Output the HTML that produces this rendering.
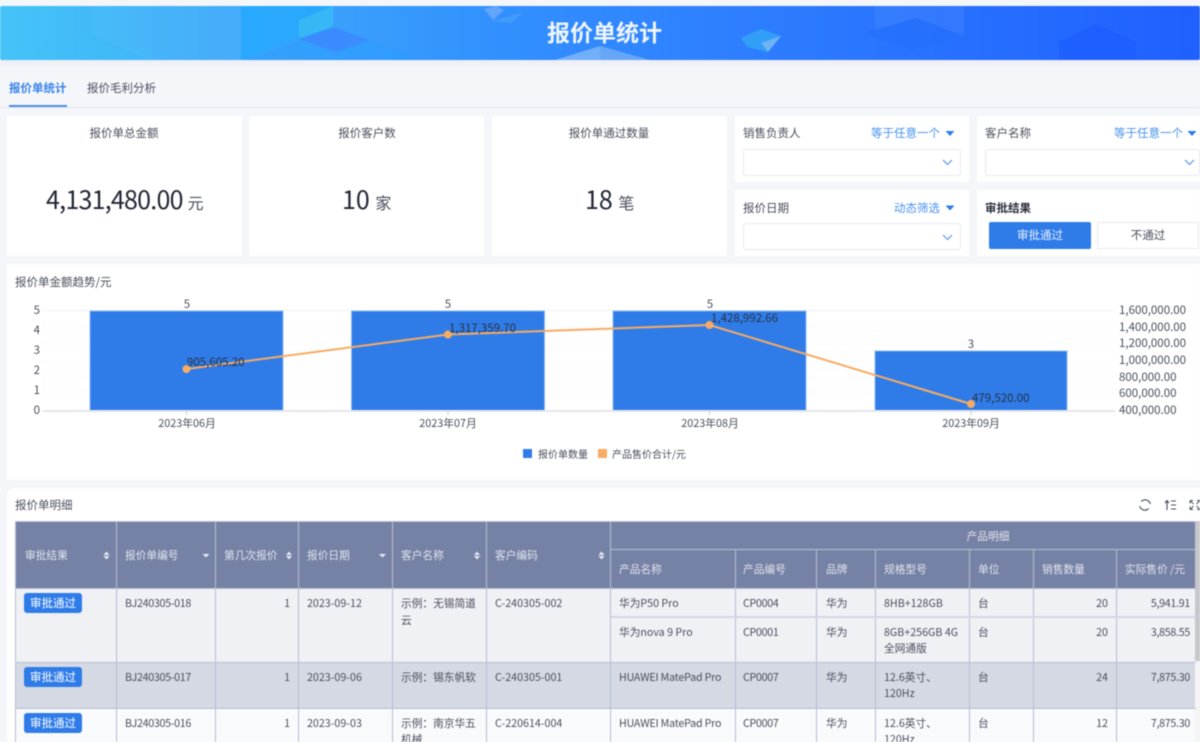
<!DOCTYPE html>
<html lang="zh"><head><meta charset="utf-8"><title>报价单统计</title>
<style>
html,body{margin:0;padding:0;width:1200px;height:742px;overflow:hidden;background:#f4f6fa}
body{position:relative;font-family:"Liberation Sans","Noto Sans CJK SC",sans-serif}
#w{position:absolute;left:0;top:0;width:1200px;height:742px;overflow:hidden;filter:blur(.45px);font-family:"Noto Sans CJK SC",sans-serif}
.b{position:absolute;box-sizing:border-box}
.t{position:absolute;white-space:nowrap;height:20px;line-height:20px;font-size:11.5px;color:#4a4f5c}
.c{transform:translateX(-50%)}
.r{transform:translateX(-100%)}
.card{position:absolute;background:#fff}
.sel{position:absolute;box-sizing:border-box;border:1px solid #e8eaef;border-radius:3px;height:27px}
.h{color:#e0e4ee;font-size:10.7px;margin-top:1px}
.d{font-size:10.7px;color:#4a4f5c;margin-top:1px}
.tag{position:absolute;left:24px;width:58px;height:20px;line-height:21px;background:#2f7ce9;border-radius:3px;color:#fff;font-size:11.5px;text-align:center}
.f{color:#4a93ee}
.big{height:30px;line-height:30px;font-size:25px;color:#202634}
.big span{font-size:16px;color:#4a4f5c;letter-spacing:0}
.m{font-size:11.5px}
.x{font-size:10.8px}
.bj{letter-spacing:-.3px}.hw{letter-spacing:-.2px}.cp{letter-spacing:-.3px}.pr{letter-spacing:-.3px}
</style></head><body>
<div id="w">
<!-- banner -->
<div class="b" style="left:0;top:60px;width:1200px;height:8px;background:linear-gradient(#eceef4,#f4f6fa)"></div>
<svg class="b" style="left:0;top:6px" width="1200" height="54" viewBox="0 0 1200 54">
<defs><linearGradient id="g" x1="0" x2="1" y1="0" y2="0">
<stop offset="0" stop-color="#45c4f8"/><stop offset=".2" stop-color="#3fa9fa"/><stop offset=".4" stop-color="#3292fe"/><stop offset=".6" stop-color="#2f80ff"/><stop offset="1" stop-color="#1f60ff"/></linearGradient></defs>
<rect width="1200" height="54" rx="2" fill="url(#g)"/>
<path d="M0 54L92 28L150 47L150 54Z" fill="#3fc0f8" opacity=".25"/>
<path d="M92 0H241V54H150L92 28Z" fill="#fff" opacity=".03"/>
<path d="M241 0H333V24L299 32L241 54Z" fill="#21a9ff" opacity=".7"/>
<path d="M241 54L333 22L420 54Z" fill="#2d9cff" opacity=".6"/>
<path d="M299 14L333 0V21L299 32Z" fill="#4dd0e8" opacity=".4"/>
<path d="M299 33L333 21L369 34L336 46Z" fill="#3f82ff" opacity=".65"/>
<path d="M484 3L496 0L504 4L493 14Z" fill="#8ab6f8" opacity=".55"/>
<path d="M492 15L524 6L511 17Z" fill="#53a6f5" opacity=".5"/>
<path d="M555 54L600 40V54Z" fill="#a8cdf5" opacity=".55"/>
<path d="M600 40L650 54H600Z" fill="#a8cdf5" opacity=".45"/>
<path d="M741 32L761 23L781 30L768 46L747 41Z" fill="#33a5f6" opacity=".85"/>
<path d="M761 37L781 30L768 46Z" fill="#7db8f4" opacity=".8"/>
<path d="M863 27L916 12L964 30L912 44Z" fill="#1f6cf5" opacity=".35"/>
<path d="M875 0H964V30L916 12L875 24Z" fill="#6ea2ff" opacity=".18"/>
<path d="M1059 36L1096 18L1136 36V54H1059Z" fill="#1b5cff" opacity=".6"/>
</svg>
<div class="t c" style="left:604.500px;top:17px;height:28px;line-height:28px;color:#eef5ff;font-size:23px;font-weight:700">报价单统计</div>
<!-- tabs -->
<div class="b" style="left:0;top:107px;width:1200px;height:1px;background:#e6e8ed"></div>
<div class="b" style="left:9px;top:105px;width:58px;height:2px;background:#4a8de9"></div>
<div class="t" style="left:9px;top:78px;color:#3b83ea;font-weight:700">报价单统计</div>
<div class="t" style="left:87px;top:78px">报价毛利分析</div>
<!-- KPI cards -->
<div class="card" style="left:7px;top:116px;width:235px;height:140px"></div>
<div class="card" style="left:249px;top:116px;width:235px;height:140px"></div>
<div class="card" style="left:492px;top:116px;width:235px;height:140px"></div>
<div class="t c" style="left:124px;top:123px">报价单总金额</div>
<div class="t c" style="left:367px;top:123px">报价客户数</div>
<div class="t c" style="left:609px;top:123px">报价单通过数量</div>
<div class="t big" style="left:46px;top:184px;letter-spacing:-.75px">4,131,480.00 <span>元</span></div>
<div class="t big" style="left:342px;top:184px">10 <span>家</span></div>
<div class="t big" style="left:585px;top:184px">18 <span>笔</span></div>
<!-- filters -->
<div class="card" style="left:735px;top:116px;width:234px;height:66px"></div>
<div class="card" style="left:977px;top:116px;width:223px;height:66px"></div>
<div class="card" style="left:735px;top:190px;width:234px;height:66px"></div>
<div class="card" style="left:977px;top:190px;width:223px;height:66px"></div>
<div class="t" style="left:743px;top:123px">销售负责人</div>
<div class="t" style="left:985px;top:123px">客户名称</div>
<div class="t" style="left:743px;top:198px">报价日期</div>
<div class="t" style="left:985px;top:198px;font-weight:700;color:#2c303b">审批结果</div>
<div class="t f" style="left:871px;top:123px">等于任意一个</div>
<div class="t f" style="left:1114px;top:123px">等于任意一个</div>
<div class="t f" style="left:894px;top:198px">动态筛选</div>
<div class="sel" style="left:743px;top:149px;width:218px"></div>
<div class="sel" style="left:985px;top:149px;width:215px"></div>
<div class="sel" style="left:743px;top:223px;width:218px"></div>
<svg class="b" style="left:0;top:0" width="1200" height="260" fill="none">
<path d="M945.500 131h9l-4.500 5z M1187.500 131h9l-4.500 5z M945.500 205.500h9l-4.500 5z" fill="#2f7ce9"/>
<path d="M943 160l4.500 4.500 4.500-4.500 M1185 160l4.500 4.500 4.500-4.500 M943 235l4.500 4.500 4.500-4.500" stroke="#4a93ee" stroke-width="1.100"/>
</svg>
<div class="b" style="left:989px;top:222px;width:102px;height:27px;background:#2f7ce9;border-radius:2px;color:#e8f1fd;font-size:11.5px;line-height:27px;text-align:center">审批通过</div>
<div class="b" style="left:1097px;top:222px;width:102px;height:27px;background:#fff;border:1px solid #e8eaef;border-radius:2px;color:#4a4f5c;font-size:11.5px;line-height:25px;text-align:center">不通过</div>
<!-- chart -->
<div class="card" style="left:7px;top:264px;width:1193px;height:216px"></div>
<div class="t" style="left:15px;top:272px">报价单金额趋势/元</div>
<svg class="b" style="left:0;top:264px" width="1200" height="216" viewBox="0 264 1200 216">
<g stroke="#f5f6f8" stroke-dasharray="2 2" fill="none">
<path d="M43 330.500H1115M43 350.500H1115M43 370.500H1115M43 390.500H1115M43 326.500H1115M43 343.500H1115M43 360.500H1115M43 377.500H1115M43 393.500H1115"/>
</g>
<path d="M43 310.500H1115" stroke="#f1f2f5"/>
<g fill="#2f7ce9" stroke="#8dbaf4" stroke-width="1">
<rect x="90" y="311" width="193" height="100"/><rect x="351.500" y="311" width="193" height="100"/><rect x="613" y="311" width="193" height="100"/><rect x="875" y="351" width="192" height="60"/>
</g>
<path d="M43 411H1115" stroke="#e5e6ea" stroke-width="2"/>
<path d="M186.500 411v4M448 411v4M709.500 411v4M971 411v4" stroke="#c8cad0"/>
<polyline points="186.500,369 448,334.500 709.500,325 971,404" fill="none" stroke="#f8ab62" stroke-width="2"/>
<g fill="#f8ab62"><circle cx="186.500" cy="369" r="4"/><circle cx="448" cy="334.500" r="4"/><circle cx="709.500" cy="325" r="4"/><circle cx="971" cy="404" r="4"/></g>
<rect x="523" y="449" width="9" height="9" fill="#2f7ce9"/><rect x="598" y="449" width="9" height="9" fill="#f8ab62"/>
</svg>
<div class="t c m" style="left:187px;top:294px">5</div>
<div class="t c m" style="left:448px;top:294px">5</div>
<div class="t c m" style="left:710px;top:294px">5</div>
<div class="t c m" style="left:971px;top:334px">3</div>
<div class="t m" style="left:187px;top:352px;color:#2a3142">905,605.20</div>
<div class="t m" style="left:449px;top:318px;color:#2a3142">1,317,359.70</div>
<div class="t m" style="left:711px;top:308px;color:#2a3142">1,428,992.66</div>
<div class="t m" style="left:972px;top:388px;color:#2a3142">479,520.00</div>
<div class="t r m" style="left:40px;top:300px">5</div>
<div class="t r m" style="left:40px;top:320px">4</div>
<div class="t r m" style="left:40px;top:340px">3</div>
<div class="t r m" style="left:40px;top:360px">2</div>
<div class="t r m" style="left:40px;top:380px">1</div>
<div class="t r m" style="left:40px;top:400px">0</div>
<div class="t m" style="left:1119px;top:300px">1,600,000.00</div>
<div class="t m" style="left:1119px;top:317px">1,400,000.00</div>
<div class="t m" style="left:1119px;top:333px">1,200,000.00</div>
<div class="t m" style="left:1119px;top:350px">1,000,000.00</div>
<div class="t m" style="left:1119px;top:367px">800,000.00</div>
<div class="t m" style="left:1119px;top:383px">600,000.00</div>
<div class="t m" style="left:1119px;top:400px">400,000.00</div>
<div class="t c x" style="left:187px;top:413px">2023年06月</div>
<div class="t c x" style="left:448px;top:413px">2023年07月</div>
<div class="t c x" style="left:710px;top:413px">2023年08月</div>
<div class="t c x" style="left:971px;top:413px">2023年09月</div>
<div class="t" style="left:538px;top:444px;font-size:10px">报价单数量</div>
<div class="t" style="left:612px;top:444px;font-size:10px">产品售价合计/元</div>
<!-- table card -->
<div class="card" style="left:7px;top:488px;width:1193px;height:254px;border-radius:8px 0 0 0"></div>
<div class="t" style="left:15px;top:495px">报价单明细</div>
<svg class="b" style="left:1130px;top:495px" width="70" height="20" viewBox="0 0 70 20" fill="none" stroke="#4a4f5c" stroke-width="1.100">
<path d="M20.300 9a5.300 5.300 0 0 0-9-2.500M9.700 11a5.300 5.300 0 0 0 9 2.500"/>
<path d="M37 15V6M35 8l2-2.500 2 2.500M41 6h5M41 10h5M41 14h5"/>
<path d="M60 5.500h3M60 5.500v3M70 5.500h-3M60 14.500h3M60 14.500v-3M70 14.500h-3M60.500 6l3 3M60.500 14l3-3M69.500 6l-3 3M69.500 14l-3-3" stroke-width=".9"/>
</svg>
<!-- table backgrounds -->
<div class="b" style="left:15px;top:521px;width:1181px;height:67px;background:#7682a5"></div>
<div class="b" style="left:15px;top:588px;width:1181px;height:74px;background:#f0f1f5"></div>
<div class="b" style="left:15px;top:662px;width:1181px;height:46px;background:#d5d9e4"></div>
<div class="b" style="left:15px;top:708px;width:1181px;height:34px;background:#f9fafc"></div>
<div class="b" style="left:1195px;top:521px;width:5px;height:221px;background:#f5f5f6"></div>
<div class="b" style="left:1195px;top:521px;width:5px;height:140px;background:#c6c7ca"></div>
<svg class="b" style="left:0;top:515px" width="1196" height="227" viewBox="0 515 1196 227" fill="none">
<g stroke="#b7bdd3" stroke-width="1">
<path d="M15.500 521V742M116.500 521V742M215.500 521V742M298.500 521V742M392.500 521V742M486.500 521V742M610.500 521V742"/>
<path d="M735.500 549V742M816.500 549V742M875.500 549V742M969.500 549V742M1033.500 549V742M1116.500 549V742"/>
<path d="M15 521.500H1196M611 549.500H1196M15 588.500H1196M15 662.500H1196M15 708.500H1196"/>
<path d="M611 617H1196" stroke="#d3d7e3" stroke-width="2"/>
</g>
<g fill="#e6e9f1">
<path d="M106.500 551.500l3 3.500h-6zM106.500 559.500l3-3.500h-6zM289 551.500l3 3.500h-6zM289 559.500l3-3.500h-6zM477 551.500l3 3.500h-6zM477 559.500l3-3.500h-6zM601.500 551.500l3 3.500h-6zM601.500 559.500l3-3.500h-6z"/>
<path d="M202.500 554h7l-3.500 3.500zM379 554h7l-3.500 3.500z"/>
</g>
</svg>
<!-- header text -->
<div class="t h" style="left:25px;top:545px">审批结果</div>
<div class="t h" style="left:125px;top:545px">报价单编号</div>
<div class="t h" style="left:224px;top:545px">第几次报价</div>
<div class="t h" style="left:307px;top:545px">报价日期</div>
<div class="t h" style="left:401px;top:545px">客户名称</div>
<div class="t h" style="left:495px;top:545px">客户编码</div>
<div class="t h c" style="left:988px;top:526px">产品明细</div>
<div class="t h" style="left:619px;top:559px">产品名称</div>
<div class="t h" style="left:743px;top:559px">产品编号</div>
<div class="t h" style="left:826px;top:559px">品牌</div>
<div class="t h" style="left:884px;top:559px">规格型号</div>
<div class="t h" style="left:978px;top:559px">单位</div>
<div class="t h" style="left:1042px;top:559px">销售数量</div>
<div class="t h" style="left:1125px;top:559px">实际售价 /元</div>
<!-- row 1 -->
<div class="tag" style="top:593px">审批通过</div>
<div class="t d bj" style="left:125px;top:593px">BJ240305-018</div>
<div class="t d r" style="left:290px;top:593px">1</div>
<div class="t d" style="left:307px;top:593px">2023-09-12</div>
<div class="t d" style="left:401px;top:593px">示例：无锡简道</div>
<div class="t d" style="left:401px;top:610px">云</div>
<div class="t d" style="left:495px;top:593px">C-240305-002</div>
<div class="t d" style="left:619px;top:593px">华为P50 Pro</div>
<div class="t d cp" style="left:743px;top:593px">CP0004</div>
<div class="t d" style="left:826px;top:593px">华为</div>
<div class="t d" style="left:884px;top:593px">8HB+128GB</div>
<div class="t d" style="left:978px;top:593px">台</div>
<div class="t d r" style="left:1108px;top:593px">20</div>
<div class="t d r pr" style="left:1190px;top:593px">5,941.91</div>
<div class="t d" style="left:619px;top:622px">华为nova 9 Pro</div>
<div class="t d cp" style="left:743px;top:622px">CP0001</div>
<div class="t d" style="left:826px;top:622px">华为</div>
<div class="t d" style="left:884px;top:622px">8GB+256GB 4G</div>
<div class="t d" style="left:884px;top:638px">全网通版</div>
<div class="t d" style="left:978px;top:622px">台</div>
<div class="t d r" style="left:1108px;top:622px">20</div>
<div class="t d r pr" style="left:1190px;top:622px">3,858.55</div>
<!-- row 2 -->
<div class="tag" style="top:667px">审批通过</div>
<div class="t d bj" style="left:125px;top:667px">BJ240305-017</div>
<div class="t d r" style="left:290px;top:667px">1</div>
<div class="t d" style="left:307px;top:667px">2023-09-06</div>
<div class="t d" style="left:401px;top:667px">示例：锡东帆软</div>
<div class="t d" style="left:495px;top:667px">C-240305-001</div>
<div class="t d hw" style="left:619px;top:667px">HUAWEI MatePad Pro</div>
<div class="t d cp" style="left:743px;top:667px">CP0007</div>
<div class="t d" style="left:826px;top:667px">华为</div>
<div class="t d" style="left:884px;top:667px">12.6英寸、</div>
<div class="t d" style="left:884px;top:683px">120Hz</div>
<div class="t d" style="left:978px;top:667px">台</div>
<div class="t d r" style="left:1108px;top:667px">24</div>
<div class="t d r pr" style="left:1190px;top:667px">7,875.30</div>
<!-- row 3 -->
<div class="tag" style="top:713px">审批通过</div>
<div class="t d bj" style="left:125px;top:713px">BJ240305-016</div>
<div class="t d r" style="left:290px;top:713px">1</div>
<div class="t d" style="left:307px;top:713px">2023-09-03</div>
<div class="t d" style="left:401px;top:713px">示例：南京华五</div>
<div class="t d" style="left:401px;top:729px">机械</div>
<div class="t d" style="left:495px;top:713px">C-220614-004</div>
<div class="t d hw" style="left:619px;top:713px">HUAWEI MatePad Pro</div>
<div class="t d cp" style="left:743px;top:713px">CP0007</div>
<div class="t d" style="left:826px;top:713px">华为</div>
<div class="t d" style="left:884px;top:713px">12.6英寸、</div>
<div class="t d" style="left:884px;top:729px">120Hz</div>
<div class="t d" style="left:978px;top:713px">台</div>
<div class="t d r" style="left:1108px;top:713px">12</div>
<div class="t d r pr" style="left:1190px;top:713px">7,875.30</div>
</div>
</body></html>
